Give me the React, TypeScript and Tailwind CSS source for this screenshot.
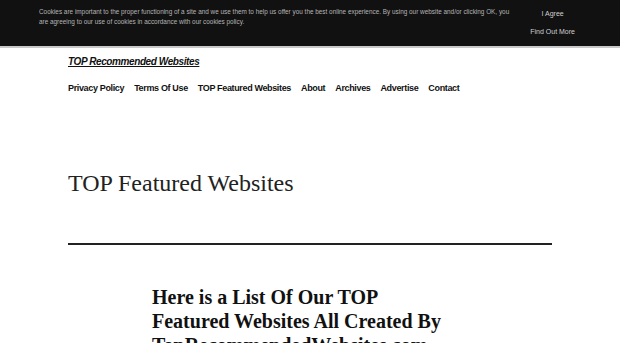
const navItems = [
  "Privacy Policy",
  "Terms Of Use",
  "TOP Featured Websites",
  "About",
  "Archives",
  "Advertise",
  "Contact",
];

function CookieBar() {
  return (
    <div className="absolute inset-x-0 top-0 z-10 h-[48px] bg-[#111111] border-b-2 border-[#c9c9c9] flex">
      <p className="ml-[39px] mt-[7px] w-[474px] text-[6.4px] leading-[10px] text-[#b5b5b5]">
        Cookies are important to the proper functioning of a site and we use them to help us offer you the best online
        experience. By using our website and/or clicking OK, you are agreeing to our use of cookies in accordance with
        our cookies policy.
      </p>
      <div className="ml-auto mr-[45px] mt-[9px] flex flex-col items-center gap-[8px] text-[7px] leading-[10px] text-[#d0d0d0]">
        <span>I Agree</span>
        <span>Find Out More</span>
      </div>
    </div>
  );
}

export default function App() {
  return (
    <div
      className="relative min-h-[343px] bg-white overflow-hidden"
      style={{ fontFamily: '"Liberation Sans", Arial, sans-serif' }}
    >
      <CookieBar />

      <div className="mx-[68px] pt-[48px]">
        {/* site title */}
        <a className="text-[10px] leading-[12px] font-bold italic underline tracking-[-0.4px] text-[#111]">
          TOP Recommended Websites
        </a>

        {/* nav */}
        <nav className="mt-[10px] flex gap-[10px] text-[9px] leading-[12px] font-bold tracking-[-0.35px] text-[#111]">
          {navItems.map((item) => (
            <span key={item}>{item}</span>
          ))}
        </nav>

        {/* page title */}
        <h1
          className="mt-[75px] text-[24px] leading-[28px] text-[#222]"
          style={{ fontFamily: '"Liberation Serif", "Times New Roman", serif' }}
        >
          TOP Featured Websites
        </h1>

        <div className="mt-[46px] h-[2px] bg-[#222]" />

        <div className="mx-auto mt-[40px] w-[316px]">
          <h2
            className="text-[20px] leading-[24px] font-bold text-[#111]"
            style={{ fontFamily: '"Liberation Serif", "Times New Roman", serif' }}
          >
            Here is a List Of Our TOP
            <br />
            Featured Websites All Created By
            <br />
            TopRecommendedWebsites.com
          </h2>
        </div>
      </div>
    </div>
  );
}
